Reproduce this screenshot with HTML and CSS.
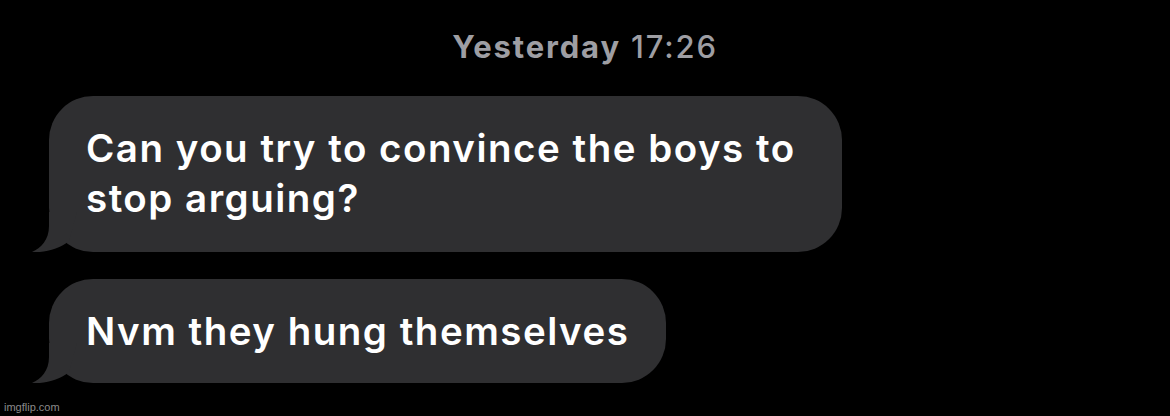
FILE: index.html
```html
<!DOCTYPE html>
<html lang="en">

<head>
    <meta charset="UTF-8">
    <meta name="viewport" content="width=device-width, initial-scale=1.0">
    <title>Messages</title>
    <link rel="stylesheet" href="styles.css">
</head>

<body>
    <div class="thread">
        <div class="timestamp"><span class="day">Yesterday</span> 17:26</div>

        <div class="bubble bubble-long">
            Can you try to convince the boys to stop arguing?
            <svg class="tail" viewBox="0 0 45 40" width="45" height="40">
                <path d="M17 0 L17 14 C17 28 9 36 0 40 C12 41 28 37 37 29 L45 0 Z" fill="#2f2f31" />
            </svg>
        </div>

        <div class="bubble">
            Nvm they hung themselves
            <svg class="tail" viewBox="0 0 45 40" width="45" height="40">
                <path d="M17 0 L17 14 C17 28 9 36 0 40 C12 41 28 37 37 29 L45 0 Z" fill="#2f2f31" />
            </svg>
        </div>
    </div>

    <div class="watermark">imgflip.com</div>
</body>

</html>
```

FILE: styles.css
```css
body {
    font-family: Inter, "Noto Sans", sans-serif;
    margin: 0;
    background-color: #000;
    height: 416px;
    overflow: hidden;
    position: relative;
}

.thread {
    display: flex;
    flex-direction: column;
    align-items: flex-start;
    gap: 27px;
    padding: 28px 0 0 49px;
}

.timestamp {
    align-self: stretch;
    margin-left: -49px;
    margin-bottom: 3px;
    text-align: center;
    font-size: 31px;
    line-height: 38px;
    font-weight: 500;
    letter-spacing: 1.85px;
    color: #9e9ea3;
}

.timestamp .day {
    font-weight: 700;
}

.bubble {
    position: relative;
    background-color: #2f2f31;
    color: #fff;
    font-size: 38.5px;
    line-height: 50px;
    font-weight: 600;
    letter-spacing: 1.5px;
    padding: 27px 37px;
    border-radius: 44px;
    max-width: 719px;
}

.bubble-long {
    width: 719px;
    padding-bottom: 29px;
}

.tail {
    position: absolute;
    left: -17px;
    bottom: 0;
}

.watermark {
    position: absolute;
    left: 4px;
    bottom: 3px;
    font-family: "Liberation Sans", Arial, sans-serif;
    font-size: 11px;
    color: #8a8a8a;
}
```
